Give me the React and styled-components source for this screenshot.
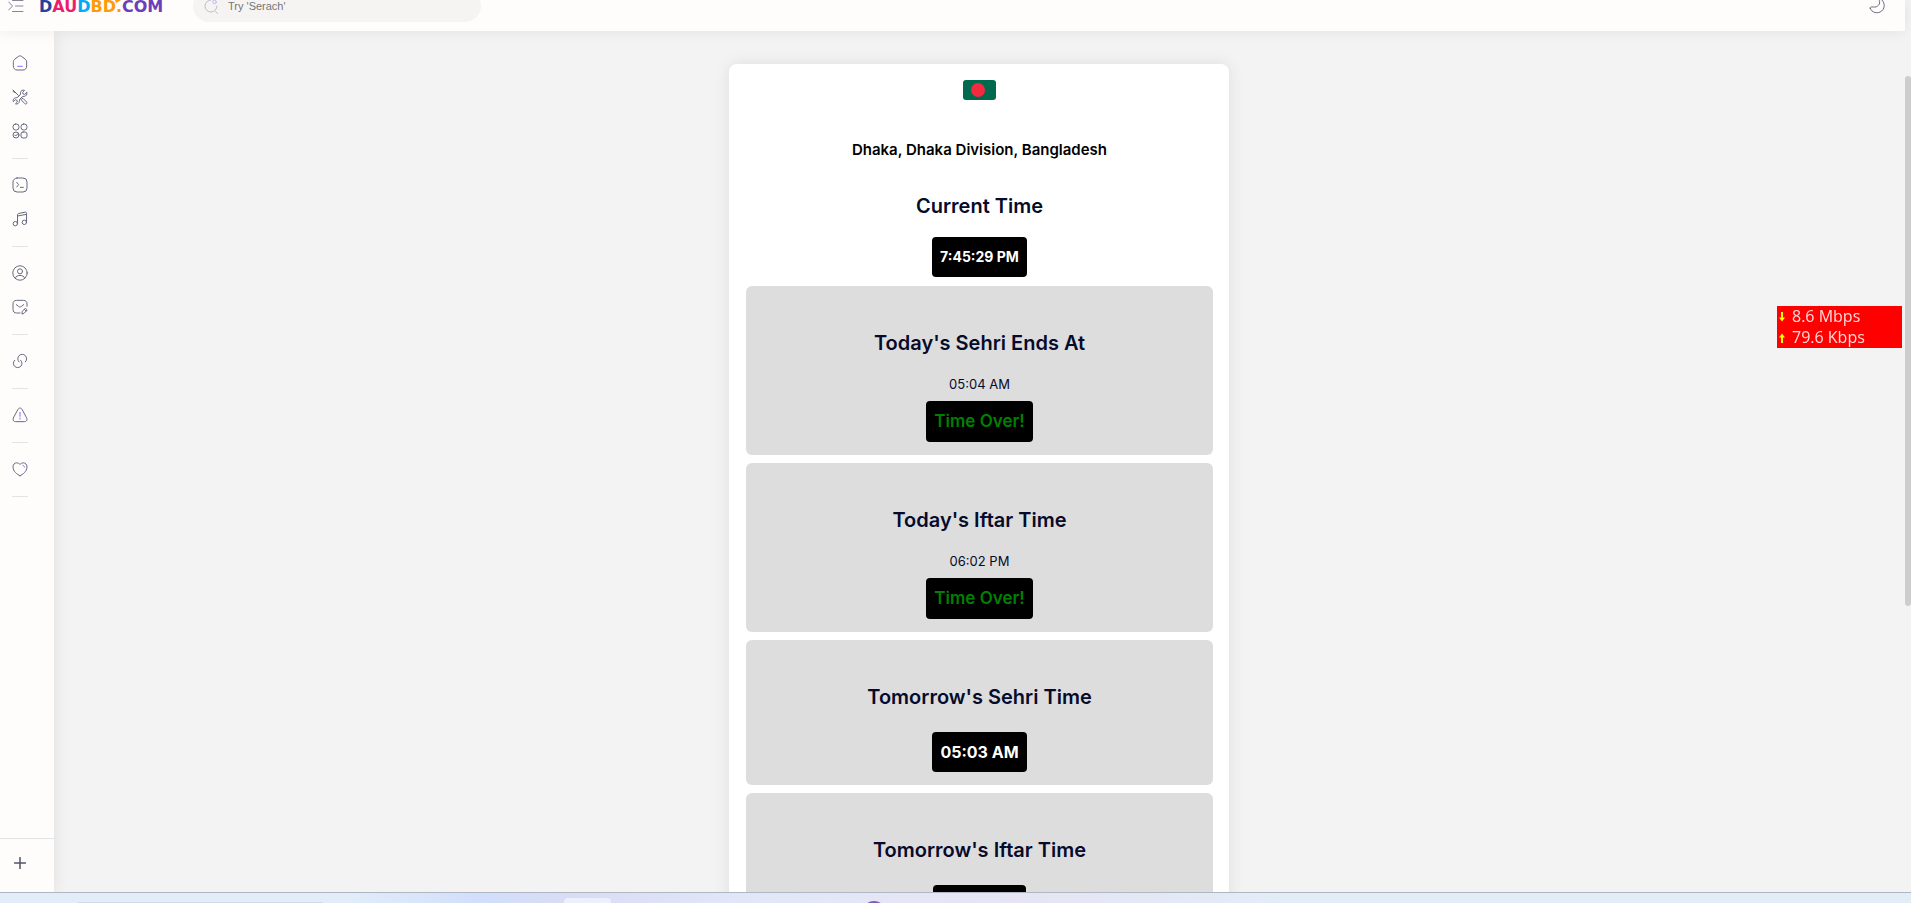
import React from "react";
import styled, { createGlobalStyle } from "styled-components";

const navGroups = [
  ["Home", "Tools", "Apps"],
  ["Terminal", "Music"],
  ["Account", "Contact"],
  ["Links"],
  ["Report"],
  ["Donate"],
];

const times = [
  { title: "Today's Sehri Ends At", time: "05:04 AM", over: true },
  { title: "Today's Iftar Time", time: "06:02 PM", over: true },
  { title: "Tomorrow's Sehri Time", time: "05:03 AM" },
  { title: "Tomorrow's Iftar Time", time: "06:03 PM" },
];

const shapes = {
  Home: (
    <>
      <path d="M2 10.500C2 8.500 3 7.200 4.500 6L9.500 2.200C11 1 13 1 14.500 2.200L19.500 6C21 7.200 22 8.500 22 10.500V16.500C22 20 20 22.500 16.500 22.500H7.500C4 22.500 2 20 2 16.500Z" />
      <path d="M8.500 17H15.500" stroke="#a48bff" strokeWidth="2" />
    </>
  ),
  Tools: (
    <>
      <path d="M1.500 1.500L9.500 9.500M1.500 3.500L4.500 5.500" />
      <path d="M14.500 15L16.500 14L22 19.500C22.800 20.500 22.500 21.500 21.800 22C21 22.800 20 22.700 19.200 22L14 16.500Z" />
      <path d="M22.200 5.500L19 8L16.500 7.500L16 5L18.800 2C16 .8 13 2.500 12.800 5.500C12.800 7 12.800 8 12 9L9 12C8 12.800 6.500 13 5.500 13.200C2.500 13.500 1 16.500 2 19L5 16.200L7.500 17L8 19.500L5.200 22.200C8 23.300 10.800 21.500 11 18.700C11 17 11.200 16 12 15L15 12C16 11 17.200 11.200 18.500 11C21.500 10.800 23.200 8 22.200 5.500Z" />
    </>
  ),
  Apps: (
    <>
      <rect x="1.500" y="1.500" width="9" height="9" rx="4" />
      <rect x="13.500" y="1.500" width="9" height="9" rx="4" />
      <circle cx="6" cy="18" r="4.500" />
      <rect x="13.500" y="13.500" width="9" height="9" rx="3" />
      <path d="M4 18L5.500 19.500L9.500 15.500" />
    </>
  ),
  Terminal: (
    <>
      <rect x="1.500" y="1.500" width="21" height="21" rx="6" />
      <path d="M7 8L10 11.500L7 15M12.500 15.500H17" />
    </>
  ),
  Music: (
    <>
      <circle cx="5" cy="19" r="3.300" />
      <circle cx="18.500" cy="17" r="3.300" />
      <path d="M8.300 19V5.500C8.300 4.500 9 4 10 3.700L19.500 1.800C21 1.500 21.800 2 21.800 3.500V17M8.300 7.500L21.800 5" />
    </>
  ),
  Account: (
    <>
      <circle cx="12" cy="12" r="10.800" />
      <circle cx="12" cy="9.500" r="3.800" />
      <path d="M5 20C5.500 16.800 8.500 15.700 12 15.700S18.500 16.800 19 20" />
    </>
  ),
  Contact: (
    <>
      <path d="M12 21H7C3.500 21 1.500 19 1.500 15.500V7.500C1.500 4 3.500 2 7 2H17C20.500 2 22.500 4 22.500 7.500V11" />
      <path d="M6.500 8.500L10 11.200C11.200 12.200 12.800 12.200 14 11.200L17.500 8.500" />
      <path d="M15 22L15.500 18.500L20 13.800L22.800 16.500L18.300 21.200ZM18.500 15.500L21 18" />
    </>
  ),
  Links: (
    <>
      <path d="M13.060 10.940C15.570 13.450 15.570 17.510 13.060 20.010S6.490 22.510 3.990 20.010S1.480 13.440 3.990 10.940" />
      <path d="M10.590 13.410C7.990 10.810 7.990 6.590 10.590 3.980S17.410 1.380 20.020 3.980S22.620 10.800 20.020 13.410" />
    </>
  ),
  Report: (
    <>
      <path d="M9 3.500C10.800 .8 13.200 .8 15 3.500L21.500 15.500C23.500 19.500 22 22 18.500 22H5.500C2 22 .5 19.500 2.500 15.500Z" />
      <path d="M12 8V14M12 16.500V18" stroke="#806aff" />
    </>
  ),
  Donate: (
    <>
      <path d="M12 22C8 20.500 1.500 15.500 1.500 9C1.500 5 4 2.800 7 2.800C9.200 2.800 10.800 4 12 5.200C13.200 4 14.800 2.800 17 2.800C20 2.800 22.500 5 22.500 9C22.500 15.500 16 20.500 12 22Z" />
      <path d="M16.500 6.500C17.500 6.700 18.500 7.800 18.700 9" stroke="#806aff" />
    </>
  ),
};

const App = () => {
  return (
    <>
      <GlobalStyle />
      <Screen>
        <Browser>
          <Page>
            <Header>
              <IconButton aria-label="Toggle menu">
                <MenuIcon viewBox="0 0 16 14">
                  <path d="M.7 3L4.500 7L.7 11" />
                  <path d="M4.500 1.500H15M7.500 7H15M4.500 12.500H15" />
                </MenuIcon>
              </IconButton>
              <Logo href="/">
                <Tone $color="#27409b">D</Tone>
                <Tone $color="#ec1e6b">AU</Tone>
                <Tone $color="#06a9f4">D</Tone>
                <Tone $color="#ff9a08">BD.</Tone>
                <Tone $color="#6c3fb8">COM</Tone>
                <Leaf viewBox="0 0 6 3">
                  <path d="M0 0H6L1 3Z" />
                </Leaf>
              </Logo>
              <Search>
                <SearchIcon viewBox="0 0 16 16">
                  <path d="M8 2A6 6 0 1 0 14 8M12.500 13.500L14.500 15.500" />
                  <circle cx="11.500" cy="4" r="1.800" stroke="#c5b3fb" />
                </SearchIcon>
                <input aria-label="Search" placeholder="Try 'Serach'" />
              </Search>
              <IconButton aria-label="Dark mode">
                <Icon viewBox="0 0 24 24">
                  <path d="M1.800 15.500C4 22 13 24.500 19 19.500C25 14.500 23.500 5 17.500 1.500C15.500 .8 14.500 1.500 15.500 3.500C17.500 9 13 14.500 6.500 13.500C3 13 1 13.500 1.800 15.500Z" />
                </Icon>
              </IconButton>
            </Header>
            <Body>
              <Sidebar>
                <nav>
                  {navGroups.map((group) => (
                    <NavGroup key={group[0]}>
                      {group.map((name) => (
                        <NavLink key={name} href={`#${name}`} aria-label={name}>
                          <Icon viewBox="0 0 24 24">{shapes[name]}</Icon>
                        </NavLink>
                      ))}
                    </NavGroup>
                  ))}
                </nav>
                <SidebarFooter>
                  <IconButton aria-label="Add">
                    <PlusIcon viewBox="0 0 12 12">
                      <path d="M6 .5V11.500M.5 6H11.500" />
                    </PlusIcon>
                  </IconButton>
                </SidebarFooter>
              </Sidebar>
              <Main>
                <Card>
                  <Flag viewBox="0 0 33 20">
                    <rect width="33" height="20" rx="3" fill="#006a4e" />
                    <circle cx="15" cy="10" r="7" fill="#f42a41" />
                  </Flag>
                  <Place>Dhaka, Dhaka Division, Bangladesh</Place>
                  <Title>Current Time</Title>
                  <Badge $small>7:45:29 PM</Badge>
                  <List>
                    {times.map((item) => (
                      <Item key={item.title}>
                        <Title $wide={!item.over}>{item.title}</Title>
                        {item.over && <Time>{item.time}</Time>}
                        {item.over ? (
                          <OverBadge>Time Over!</OverBadge>
                        ) : (
                          <Badge>{item.time}</Badge>
                        )}
                      </Item>
                    ))}
                  </List>
                </Card>
              </Main>
            </Body>
          </Page>
          <Scrollbar>
            <Thumb />
          </Scrollbar>
        </Browser>
        <Taskbar>
          <TaskSearch />
          <TaskButton />
          <TaskApp />
        </Taskbar>
        <Speed>
          <SpeedRow>
            <Arrow viewBox="0 0 8 12">
              <path d="M4 1V8" />
              <path d="M1 6.500H7L4 10.500Z" fill="#ff0" stroke="none" />
            </Arrow>
            8.6 Mbps
          </SpeedRow>
          <SpeedRow>
            <Arrow viewBox="0 0 8 12">
              <path d="M4 11V4" />
              <path d="M1 5.500H7L4 1.500Z" fill="#ff0" stroke="none" />
            </Arrow>
            79.6 Kbps
          </SpeedRow>
        </Speed>
      </Screen>
    </>
  );
};

const GlobalStyle = createGlobalStyle`
  * {
    box-sizing: border-box;
  }
  body {
    margin: 0;
    background: #f3f3f3;
    color: #060b2b;
    font-family: Inter, "Open Sans", sans-serif;
  }
`;

const Screen = styled.div`
  display: flex;
  flex-direction: column;
  height: 100vh;
  overflow: hidden;
`;

const Browser = styled.div`
  display: flex;
  flex: 1;
  min-height: 0;
`;

const Page = styled.div`
  display: flex;
  flex-direction: column;
  flex: 1;
  min-width: 0;
`;

const Header = styled.header`
  display: flex;
  align-items: flex-end;
  height: 31px;
  flex: none;
  padding: 0 20px 9px 8px;
  background: #fffdfc;
  box-shadow: 0 0 16px rgba(0, 0, 0, 0.08);
  z-index: 2;
`;

const IconButton = styled.button`
  display: flex;
  align-items: center;
  height: 32px;
  padding: 0;
  border: 0;
  background: none;
`;

const Icon = styled.svg`
  display: block;
  width: 16px;
  height: 16px;
  fill: none;
  stroke: #666a80;
  stroke-width: 1.5;
  stroke-linecap: round;
  stroke-linejoin: round;
`;

const MenuIcon = styled(Icon)`
  height: 14px;
  stroke: #85869a;
  stroke-width: 1;
`;

const PlusIcon = styled(Icon)`
  width: 12px;
  height: 12px;
  stroke: #50536b;
`;

const Logo = styled.a`
  position: relative;
  width: 128px;
  margin-left: 15px;
  font-family: "DejaVu Sans", sans-serif;
  font-size: 16px;
  font-weight: 700;
  line-height: 30px;
  white-space: nowrap;
  text-decoration: none;
`;

const Tone = styled.span`
  color: ${(props) => props.$color};
`;

const Leaf = styled.svg`
  position: absolute;
  top: 8px;
  left: 76px;
  width: 6px;
  height: 3px;
  fill: #ff9a08;
`;

const Search = styled.label`
  display: flex;
  align-items: center;
  gap: 9px;
  width: 288px;
  height: 32px;
  margin: 0 auto 0 26px;
  padding: 0 10px;
  border-radius: 16px;
  background: #f5f4f3;
  input {
    flex: 1;
    min-width: 0;
    padding: 0;
    border: 0;
    outline: 0;
    background: none;
    font: 11px "Liberation Sans", sans-serif;
  }
  input::placeholder {
    color: #757575;
  }
`;

const SearchIcon = styled(Icon)`
  stroke: #bdbdc4;
  stroke-width: 1;
`;

const Body = styled.div`
  display: flex;
  flex: 1;
  min-height: 0;
`;

const Sidebar = styled.aside`
  display: flex;
  flex-direction: column;
  justify-content: space-between;
  width: 54px;
  flex: none;
  padding-top: 24px;
  background: #fffdfc;
  box-shadow: 0 0 16px rgba(0, 0, 0, 0.09);
`;

const NavGroup = styled.div`
  display: flex;
  flex-direction: column;
  align-items: center;
  gap: 18px;
  width: 16px;
  margin: 0 12px 18px;
  padding-bottom: 19px;
  border-bottom: 1px solid #e3e3e6;
`;

const NavLink = styled.a`
  display: block;
`;

const SidebarFooter = styled.div`
  display: flex;
  height: 54px;
  padding: 8px 14px;
  border-top: 1px solid #e3e3e6;
`;

const Main = styled.main`
  flex: 1;
  min-width: 0;
  padding: 33px 1px 0 0;
  overflow: hidden;
`;

const Card = styled.section`
  display: flex;
  flex-direction: column;
  align-items: center;
  max-width: 500px;
  margin: 0 auto;
  padding: 16px 16px 16px 17px;
  border-radius: 8px;
  background: #fff;
  box-shadow: 0 0 16px rgba(0, 0, 0, 0.09);
`;

const Flag = styled.svg`
  width: 33px;
  height: 20px;
`;

const Place = styled.p`
  margin: 38px 0 29px;
  color: #000;
  font-size: 15px;
  font-weight: 600;
  line-height: 24px;
`;

const Title = styled.h2`
  margin: 0 0 ${(props) => (props.$wide ? "20px" : "16px")};
  font-size: 20px;
  font-weight: 600;
  line-height: 30px;
`;

const Badge = styled.strong`
  padding: 0 8px;
  border-radius: 4px;
  background: #000;
  color: #fff;
  font-size: ${(props) => (props.$small ? "14px" : "16px")};
  font-weight: 700;
  line-height: 40px;
`;

const OverBadge = styled(Badge)`
  color: #008000;
  font-size: 17px;
  font-weight: 600;
  line-height: 41px;
`;

const List = styled.div`
  display: flex;
  flex-direction: column;
  gap: 8px;
  align-self: stretch;
  margin-top: 9px;
`;

const Item = styled.article`
  display: flex;
  flex-direction: column;
  align-items: center;
  padding: 42px 12px 13px;
  border-radius: 6px;
  background: #ddd;
`;

const Time = styled.span`
  margin-bottom: 7px;
  font-size: 13px;
  line-height: 20px;
`;

const Scrollbar = styled.div`
  width: 6px;
  padding-top: 76px;
  background: #f3f3f3;
`;

const Thumb = styled.div`
  height: 65%;
  border-radius: 3px;
  background: #cdcdcd;
`;

const Taskbar = styled.footer`
  display: flex;
  align-items: flex-end;
  height: 11px;
  flex: none;
  padding-left: 78px;
  border-top: 1px solid #aeb7c2;
  background: linear-gradient(
    90deg,
    #e2edf9 0%,
    #e2edf9 18%,
    #d1dffb 25%,
    #dadcf5 30%,
    #e2e8f8 40%,
    #e6e4f4 53%,
    #e2edf8 68%,
    #e2edf8 100%
  );
  overflow: hidden;
`;

const TaskSearch = styled.div`
  width: 245px;
  height: 1px;
  background: #d2dae6;
`;

const TaskButton = styled.div`
  width: 47px;
  height: 5px;
  margin-left: 241px;
  border-radius: 4px 4px 0 0;
  background: #ebf0fc;
`;

const TaskApp = styled.div`
  width: 24px;
  height: 24px;
  margin: 0 0 -22px 251px;
  border-radius: 50%;
  background: #7d5bb5;
`;

const Speed = styled.div`
  position: fixed;
  top: 306px;
  right: 9px;
  width: 125px;
  background: #f00;
  color: #ffd9d9;
  font: 16px/21px "Open Sans", sans-serif;
  z-index: 3;
`;

const SpeedRow = styled.div`
  display: flex;
  align-items: center;
  gap: 6px;
  padding-left: 1px;
`;

const Arrow = styled.svg`
  width: 8px;
  height: 12px;
  fill: none;
  stroke: #ff0;
  stroke-width: 2;
`;

export default App;
